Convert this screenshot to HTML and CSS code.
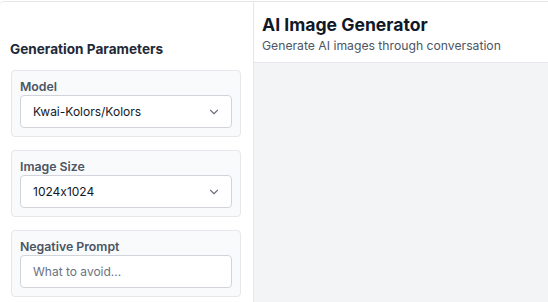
FILE: index.html
```html
<!DOCTYPE html>
<html lang="en">
<head>
  <meta charset="UTF-8">
  <meta name="viewport" content="width=device-width, initial-scale=1.0">
  <title>AI Image Generator</title>
  <link rel="stylesheet" href="styles.css">
</head>
<body>
<div class="app">
  <aside class="sidebar">
    <h3 class="side-title">Generation Parameters</h3>

    <div class="field">
      <label>Model</label>
      <div class="select">
        <span>Kwai-Kolors/Kolors</span>
        <svg width="14" height="14" viewBox="0 0 24 24"><path d="M6 9l6 6 6-6" fill="none" stroke="#6b7280" stroke-width="1.9" stroke-linecap="round" stroke-linejoin="round"/></svg>
      </div>
    </div>

    <div class="field">
      <label>Image Size</label>
      <div class="select">
        <span>1024x1024</span>
        <svg width="14" height="14" viewBox="0 0 24 24"><path d="M6 9l6 6 6-6" fill="none" stroke="#6b7280" stroke-width="1.9" stroke-linecap="round" stroke-linejoin="round"/></svg>
      </div>
    </div>

    <div class="field">
      <label>Negative Prompt</label>
      <div class="input">What to avoid...</div>
    </div>
  </aside>

  <main class="main">
    <div class="header">
      <h1>AI Image Generator</h1>
      <p>Generate AI images through conversation</p>
    </div>
    <div class="chat"></div>
  </main>
</div>
</body>
</html>
```
FILE: styles.css
```css
body {
  margin: 0;
  font-family: Inter, "Liberation Sans", sans-serif;
  font-feature-settings: "calt" 0;
  color: #111827;
  background: #fff;
}

.app {
  display: flex;
  height: 302px;
  margin-top: 1px;
  border-top: 1px solid #e5e7eb;
  border-top-left-radius: 4px;
  overflow: hidden;
}

.sidebar {
  width: 254px;
  flex-shrink: 0;
  border-right: 1px solid #e5e7eb;
  padding: 38px 12px 0 11px;
  box-sizing: border-box;
}

.side-title {
  margin: 0 0 12px -1px;
  font-size: 13.6px;
  font-weight: 700;
  color: #1f2937;
  line-height: 18px;
}

.field {
  background: #f9fafb;
  border: 1px solid #e5e7eb;
  border-radius: 4px;
  padding: 8px 8px 8px;
  margin-bottom: 13px;
  height: 67px;
  box-sizing: border-box;
}

.field label {
  display: block;
  font-size: 12.3px;
  font-weight: 600;
  color: #4b5563;
  line-height: 16px;
}

.select,
.input {
  display: flex;
  align-items: center;
  justify-content: space-between;
  height: 33px;
  box-sizing: border-box;
  background: #fff;
  border: 1px solid #d1d5db;
  border-radius: 4px;
  padding: 0 10px 0 12px;
  font-size: 12px;
  color: #111827;
}

.input {
  color: #6b7280;
}

.main {
  flex: 1;
  display: flex;
  flex-direction: column;
}

.header {
  height: 61px;
  border-bottom: 1px solid #e5e7eb;
  padding: 12px 8px 0;
  box-sizing: border-box;
}

.header h1 {
  margin: 0;
  font-size: 17.6px;
  font-weight: 700;
  line-height: 22px;
  color: #111827;
}

.header p {
  margin: 2px 0 0;
  font-size: 12.2px;
  color: #4b5563;
}

.chat {
  flex: 1;
  background: #f3f4f6;
}
```
